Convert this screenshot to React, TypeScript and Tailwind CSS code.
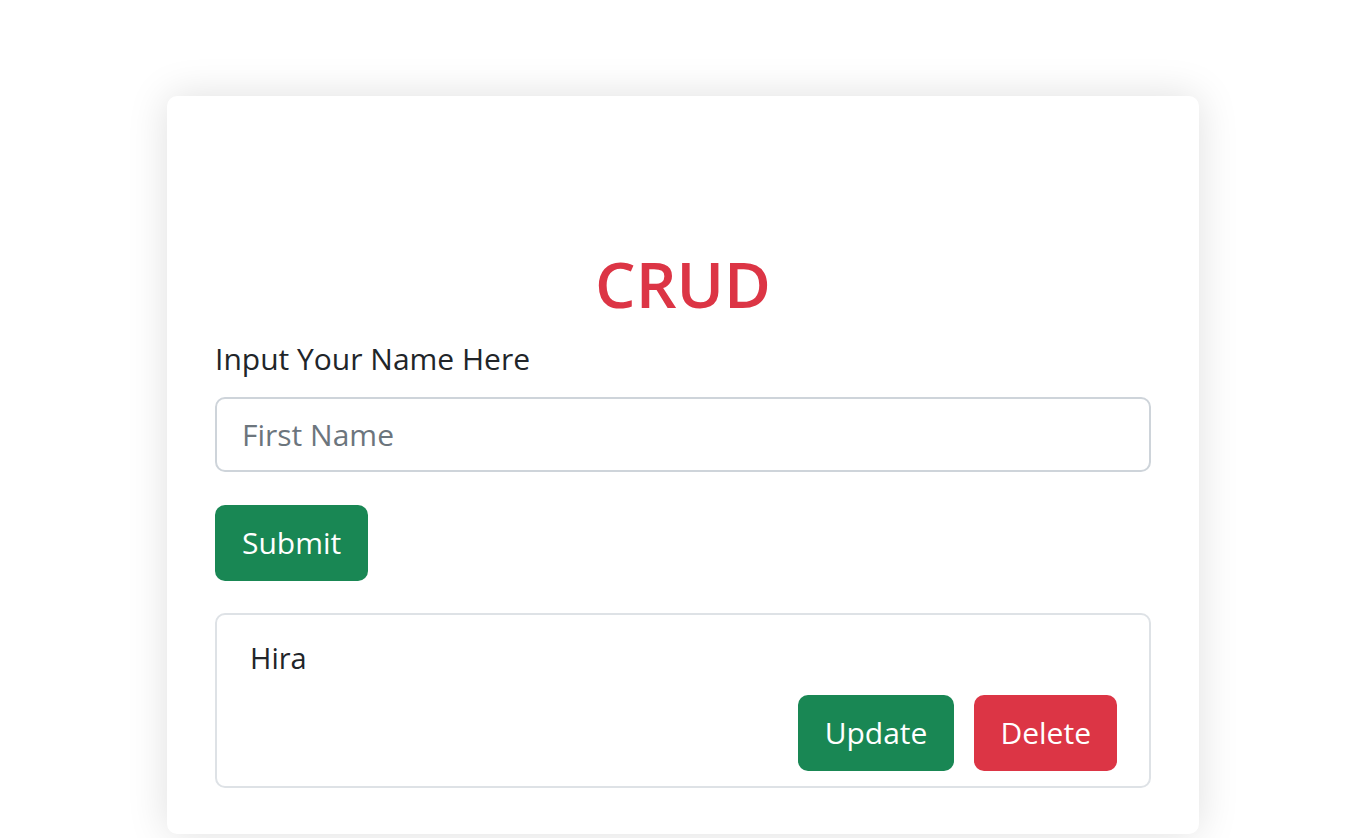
const App = () => {
    const items = ["Hira"]

    return (
        <div className=" min-h-screen bg-white pt-[96px] " style={{ fontFamily: '"Open Sans", "Noto Sans", sans-serif' }}>
            <div className=" mx-auto w-[1032px] rounded-[10px] bg-white shadow-[0_0_40px_rgba(0,0,0,0.13)] px-12 pt-[150px] pb-[46px] ">
                <h1 className=" text-center text-[64px] leading-[1.2] font-semibold text-[#dc3545] ">CRUD</h1>
                <label className=" block mt-[13px] text-[30px] leading-[1.5] text-[#212529] ">Input Your Name Here</label>
                <input
                    className=" mt-4 block w-full h-[75px] rounded-[10px] border-2 border-[#ced4da] px-[25px] text-[30px] text-[#212529] placeholder:text-[#6c757d] outline-none "
                    placeholder="First Name"
                />
                <button className=" mt-[33px] h-[76px] px-[27px] rounded-[10px] bg-[#198754] text-white text-[30px] ">Submit</button>
                <ul className=" mt-8 ">
                    {
                        items.map((name, idx) => {
                            return (
                                <li key={idx} className=" flex flex-col rounded-[10px] border-2 border-[#dee2e6] pl-[33px] pr-[32px] pt-5 pb-[15px] ">
                                    <span className=" text-[29px] leading-[45px] text-[#212529] ">{name}</span>
                                    <div className=" flex justify-end gap-5 mt-[15px] ">
                                        <button className=" h-[76px] px-[27px] rounded-[10px] bg-[#198754] text-white text-[30px] ">Update</button>
                                        <button className=" h-[76px] px-[26px] rounded-[10px] bg-[#dc3545] text-white text-[30px] ">Delete</button>
                                    </div>
                                </li>
                            )
                        })
                    }
                </ul>
            </div>
        </div>
    )
}

export default App
